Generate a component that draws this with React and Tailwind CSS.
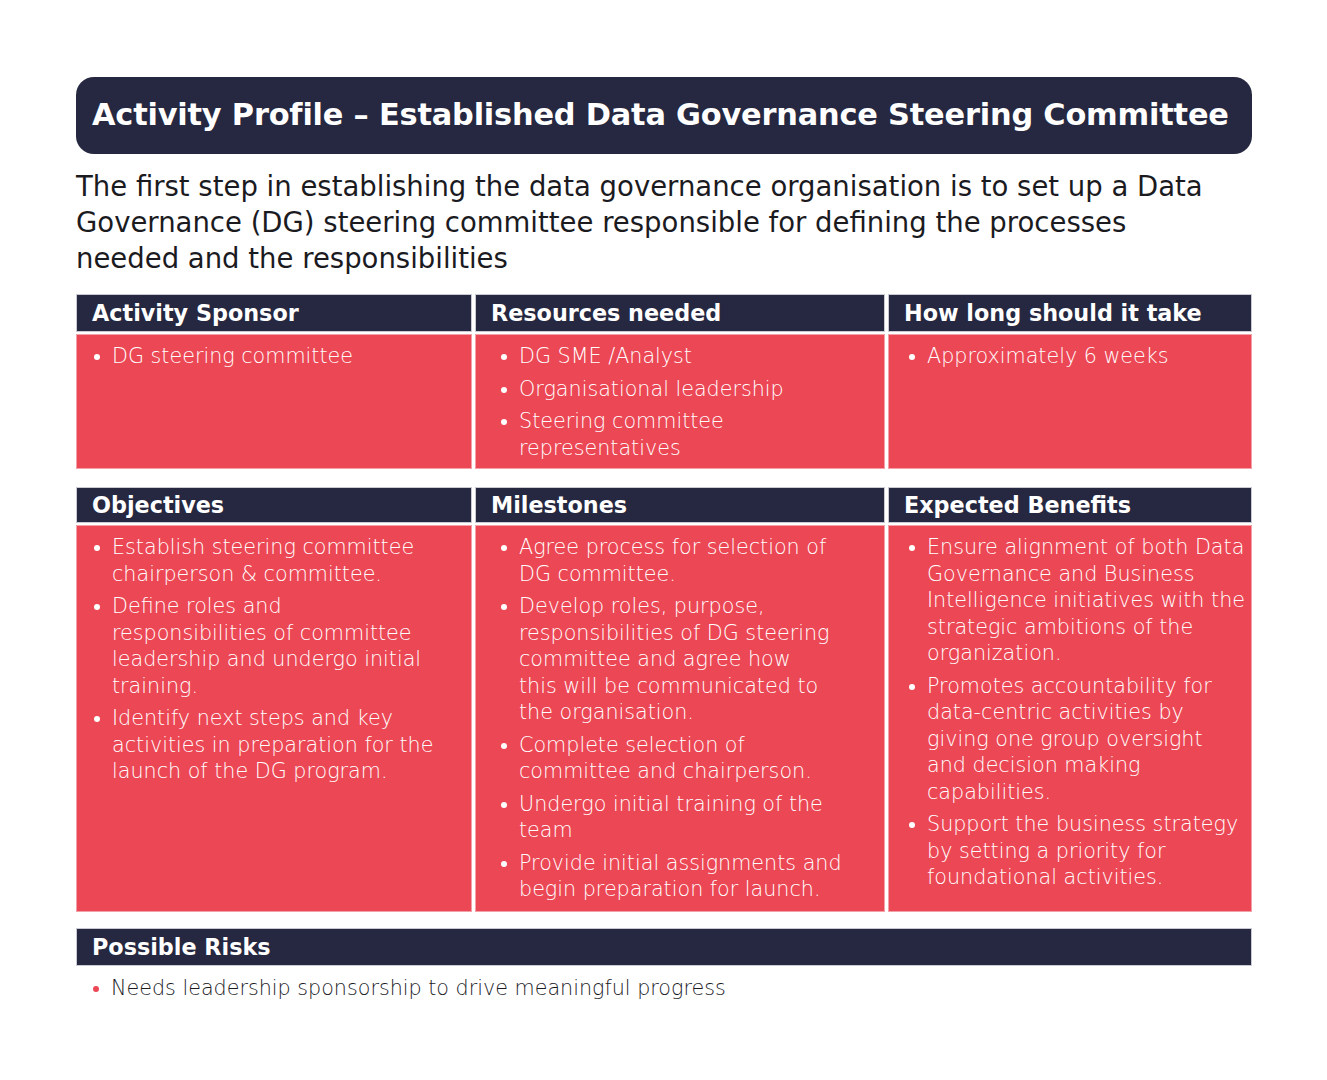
const intro = [
  "The first step in establishing the data governance organisation is to set up a Data",
  "Governance (DG) steering committee responsible for defining the processes",
  "needed and the responsibilities",
];

const topRow = [
  {
    title: "Activity Sponsor",
    width: "w-[396px]",
    pad: "pl-[17px]",
    items: [["DG steering committee"]],
  },
  {
    title: "Resources needed",
    width: "w-[410px]",
    pad: "pl-[25px]",
    items: [
      ["DG SME /Analyst"],
      ["Organisational leadership"],
      ["Steering committee", "representatives"],
    ],
  },
  {
    title: "How long should it take",
    width: "flex-1",
    pad: "pl-[20px]",
    items: [["Approximately 6 weeks"]],
  },
];

const bottomRow = [
  {
    title: "Objectives",
    width: "w-[396px]",
    pad: "pl-[17px]",
    items: [
      ["Establish steering committee", "chairperson & committee."],
      [
        "Define roles and",
        "responsibilities of committee",
        "leadership and undergo initial",
        "training.",
      ],
      [
        "Identify next steps and key",
        "activities in preparation for the",
        "launch of the DG program.",
      ],
    ],
  },
  {
    title: "Milestones",
    width: "w-[410px]",
    pad: "pl-[25px]",
    items: [
      ["Agree process for selection of", "DG committee."],
      [
        "Develop roles, purpose,",
        "responsibilities of DG steering",
        "committee and agree how",
        "this will be communicated to",
        "the organisation.",
      ],
      ["Complete selection of", "committee and chairperson."],
      ["Undergo initial training of the", "team"],
      ["Provide initial assignments and", "begin preparation for launch."],
    ],
  },
  {
    title: "Expected Benefits",
    width: "flex-1",
    pad: "pl-[20px]",
    items: [
      [
        "Ensure alignment of both Data",
        "Governance and Business",
        "Intelligence initiatives with the",
        "strategic ambitions of the",
        "organization.",
      ],
      [
        "Promotes accountability for",
        "data-centric activities by",
        "giving one group oversight",
        "and decision making",
        "capabilities.",
      ],
      [
        "Support the business strategy",
        "by setting a priority for",
        "foundational activities.",
      ],
    ],
  },
];

function Bullet({ lines, dot = "bg-white", text = "text-white" }) {
  return (
    <li className="flex mt-[6px] first:mt-0">
      <span className="w-[18px] shrink-0 h-[26.5px] flex items-center">
        <span className={`${dot} w-[6px] h-[6px] rounded-full mt-[2px]`} />
      </span>
      <span className={`${text} text-[20.7px] leading-[26.5px] font-light`}>
        {lines.map((l, i) => (
          <span key={i} className="block whitespace-nowrap">
            {l}
          </span>
        ))}
      </span>
    </li>
  );
}

function Column({ col, headH, bodyH }) {
  return (
    <div className={`${col.width} flex flex-col gap-[2px]`}>
      <div
        className={`${headH} bg-[#252840] flex items-center pl-[15px] border border-[#c9cad2]`}
      >
        <h3 className="text-white font-bold text-[22.3px] leading-none">
          {col.title}
        </h3>
      </div>
      <div
        className={`${bodyH} bg-[#ec4755] border border-[#f3a0a8] ${col.pad} pt-[8px]`}
      >
        <ul>
          {col.items.map((lines, i) => (
            <Bullet key={i} lines={lines} />
          ))}
        </ul>
      </div>
    </div>
  );
}

export default function App() {
  return (
    <div
      className="min-h-screen bg-white pt-[77px] px-[76px] pb-[60px] text-[#1b1b1f]"
      style={{ fontFamily: '"DejaVu Sans", "Noto Sans", sans-serif' }}
    >
      <div className="w-[1176px]">
        <div className="h-[77px] rounded-[18px] bg-[#252840] flex items-center pl-[16px]">
          <h1 className="text-white font-bold text-[30.4px] leading-none tracking-[-0.2px]">
            Activity Profile – Established Data Governance Steering Committee
          </h1>
        </div>

        <p className="mt-[14px] text-[27.5px] leading-[36px] font-normal">
          {intro.map((l, i) => (
            <span key={i} className="block whitespace-nowrap">
              {l}
            </span>
          ))}
        </p>

        <div className="mt-[18px] flex gap-[3px]">
          {topRow.map((col) => (
            <Column key={col.title} col={col} headH="h-[38px]" bodyH="h-[135px]" />
          ))}
        </div>

        <div className="mt-[18px] flex gap-[3px]">
          {bottomRow.map((col) => (
            <Column key={col.title} col={col} headH="h-[36px]" bodyH="h-[387px]" />
          ))}
        </div>

        <div className="mt-[16px] h-[38px] bg-[#252840] flex items-center pl-[15px] border border-[#c9cad2]">
          <h3 className="text-white font-bold text-[22.3px] leading-none">
            Possible Risks
          </h3>
        </div>
        <ul className="mt-[9px] pl-[17px]">
          <Bullet
            lines={["Needs leadership sponsorship to drive meaningful progress"]}
            dot="bg-[#ec4755]"
            text="text-[#1b1b1f]"
          />
        </ul>
      </div>
    </div>
  );
}
